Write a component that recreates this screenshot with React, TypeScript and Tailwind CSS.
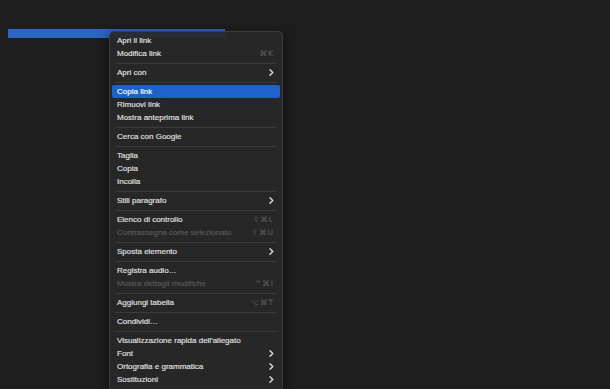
import React from "react";

type Item =
  | { type: "sep" }
  | { type: "item"; label: string; shortcut?: string; sub?: boolean; disabled?: boolean; active?: boolean };

const items: Item[] = [
  { type: "item", label: "Apri il link" },
  { type: "item", label: "Modifica link", shortcut: "⌘K" },
  { type: "sep" },
  { type: "item", label: "Apri con", sub: true },
  { type: "sep" },
  { type: "item", label: "Copia link", active: true },
  { type: "item", label: "Rimuovi link" },
  { type: "item", label: "Mostra anteprima link" },
  { type: "sep" },
  { type: "item", label: "Cerca con Google" },
  { type: "sep" },
  { type: "item", label: "Taglia" },
  { type: "item", label: "Copia" },
  { type: "item", label: "Incolla" },
  { type: "sep" },
  { type: "item", label: "Stili paragrafo", sub: true },
  { type: "sep" },
  { type: "item", label: "Elenco di controllo", shortcut: "⇧⌘L" },
  { type: "item", label: "Contrassegna come selezionato", shortcut: "⇧⌘U", disabled: true },
  { type: "sep" },
  { type: "item", label: "Sposta elemento", sub: true },
  { type: "sep" },
  { type: "item", label: "Registra audio…" },
  { type: "item", label: "Mostra dettagli modifiche", shortcut: "^⌘I", disabled: true },
  { type: "sep" },
  { type: "item", label: "Aggiungi tabella", shortcut: "⌥⌘T" },
  { type: "sep" },
  { type: "item", label: "Condividi…" },
  { type: "sep" },
  { type: "item", label: "Visualizzazione rapida dell'allegato" },
  { type: "item", label: "Font", sub: true },
  { type: "item", label: "Ortografia e grammatica", sub: true },
  { type: "item", label: "Sostituzioni", sub: true },
];

function Chevron() {
  return (
    <svg width="5" height="7" viewBox="0 0 5 7" className="block">
      <polyline points="1,0.8 3.8,3.5 1,6.2" fill="none" stroke="#e0e0e0" strokeWidth="1.3" strokeLinecap="round" strokeLinejoin="round" />
    </svg>
  );
}

export default function App() {
  return (
    <div
      className="relative w-[610px] h-[389px] overflow-hidden bg-[#1e1e1e]"
      style={{ fontFamily: '"Liberation Sans", Arial, sans-serif' }}
    >
      <div className="pt-[29px] pl-[8px]">
        <div className="w-[217px] h-[9px] bg-[#2b67c2]" />
      </div>

      <div className="absolute left-[109px] top-[31px] w-[174px] rounded-[5px] border border-[#3d3d3d] bg-[rgba(40,40,40,0.93)] shadow-[0_4px_14px_rgba(0,0,0,0.6)] px-[2px] pt-[2px] pb-[4px]">
        {items.map((it, i) =>
          it.type === "sep" ? (
            <div key={i} className="h-[6px] flex items-center px-[3px]">
              <div className="h-px w-full bg-[#3b3b3b]" />
            </div>
          ) : (
            <div
              key={i}
              className={
                "h-[13px] flex items-center justify-between pl-[5px] pr-[6px] rounded-[2px] text-[8px] leading-none [-webkit-text-stroke:0.15px] " +
                (it.active
                  ? "bg-[#1d62c9] text-white"
                  : it.disabled
                  ? "text-[#5b5b5b]"
                  : "text-[#e2e2e2]")
              }
            >
              <span className="whitespace-nowrap">{it.label}</span>
              {it.shortcut && (
                <span
                  className="text-[7.5px] tracking-[1px] text-[#606060] [-webkit-text-stroke:0px]"
                  style={{ fontFamily: '"DejaVu Sans", sans-serif' }}
                >
                  {it.shortcut}
                </span>
              )}
              {it.sub && <Chevron />}
            </div>
          )
        )}
      </div>
    </div>
  );
}
